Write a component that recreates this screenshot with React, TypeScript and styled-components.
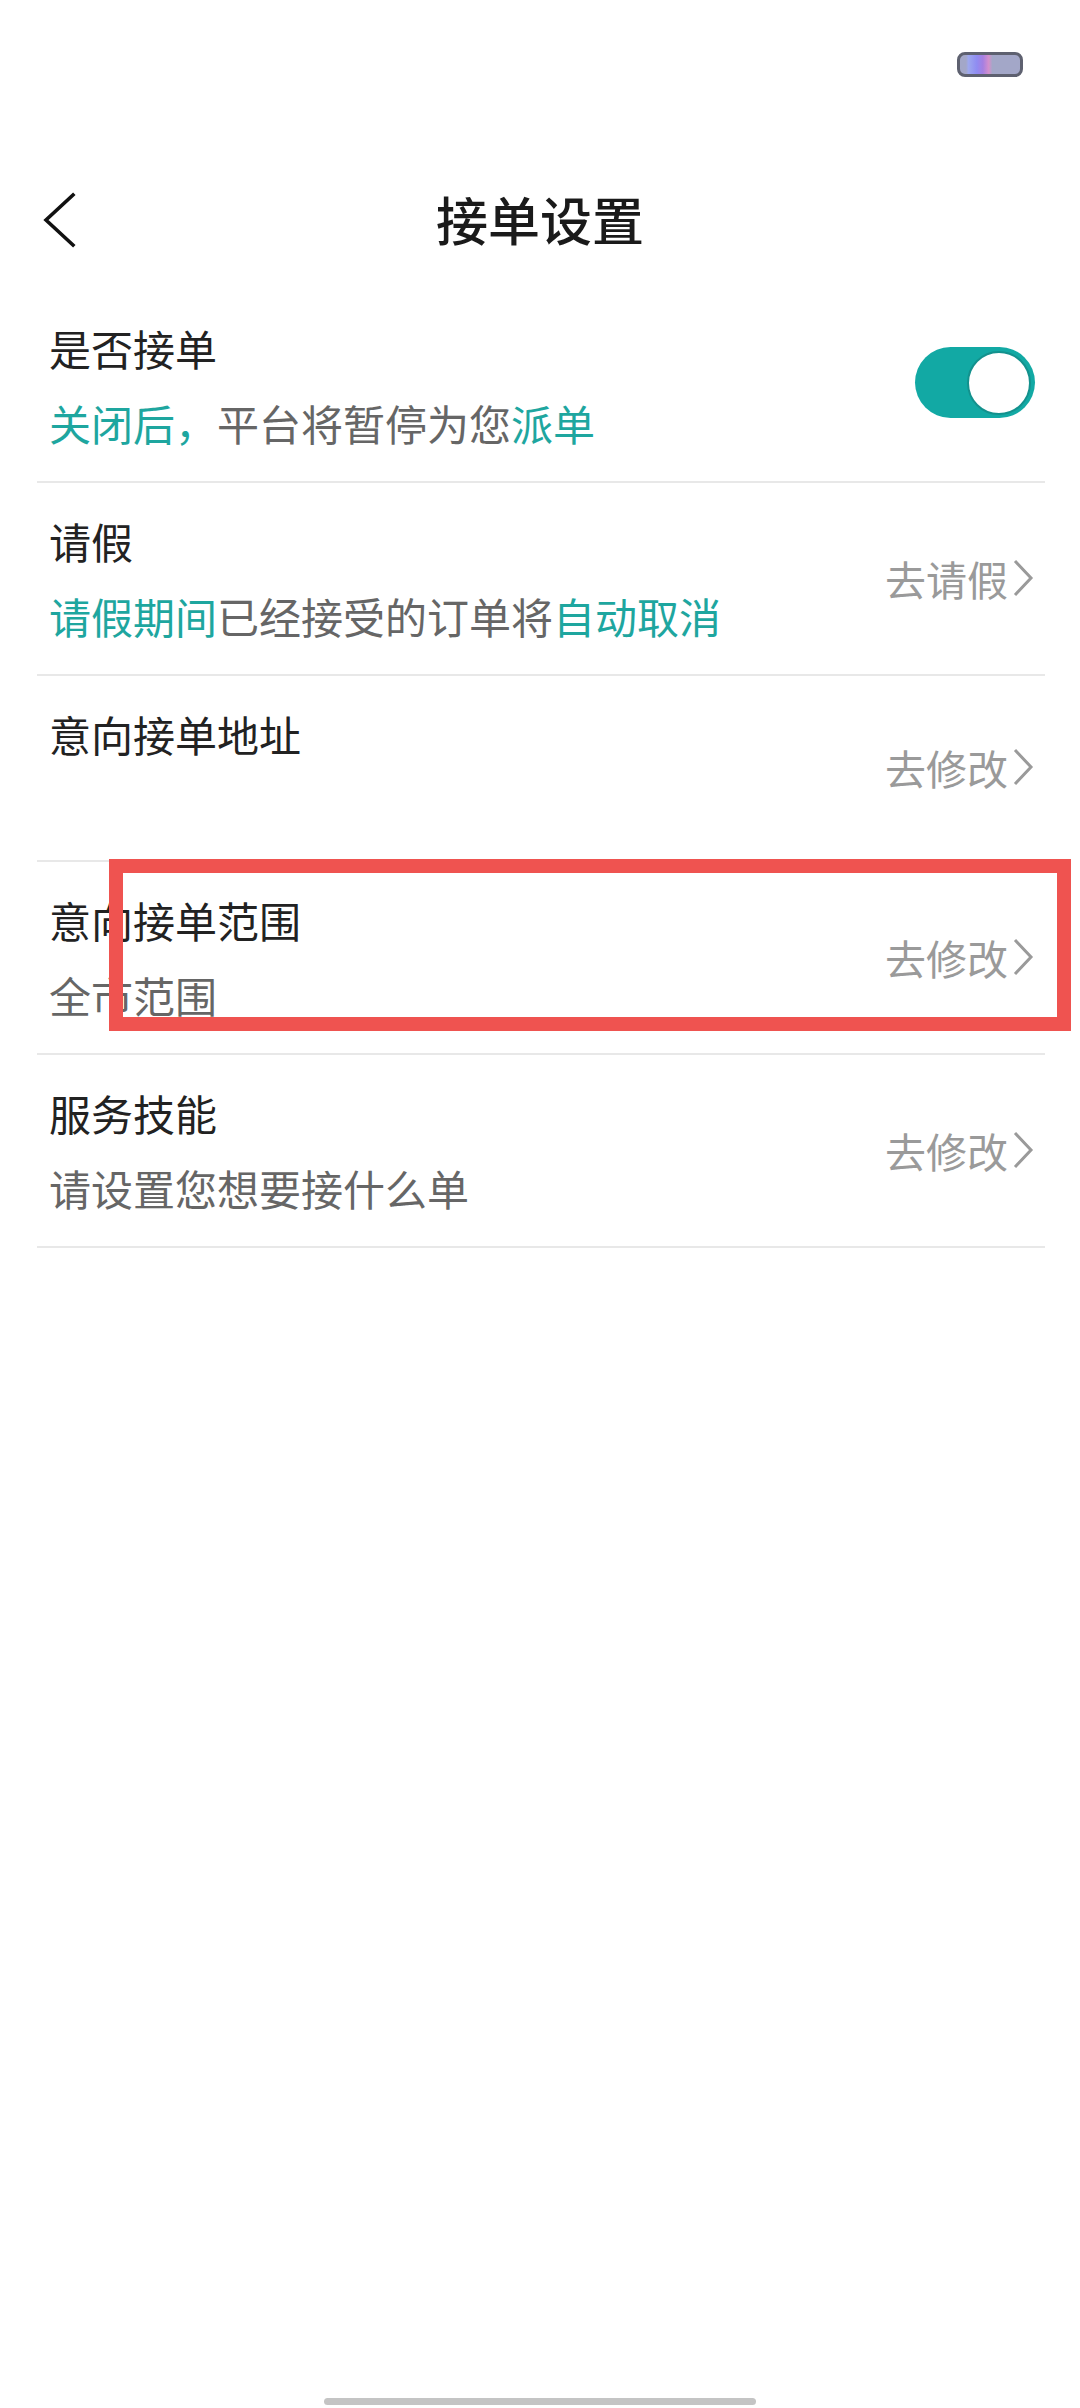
import { FC, ReactNode } from "react";
import styled, { createGlobalStyle } from "styled-components";

const GlobalStyle = createGlobalStyle`
  html, body {
    margin: 0;
    padding: 0;
    background: #ffffff;
  }
  body {
    font-family: "Noto Sans CJK SC", "Noto Sans", sans-serif;
  }
  * {
    box-sizing: border-box;
  }
`;

const Page = styled.div`
  width: 1080px;
  min-height: 2408px;
  display: flex;
  flex-direction: column;
  background: #ffffff;
`;

const StatusBar = styled.div`
  height: 150px;
  display: flex;
  justify-content: flex-end;
  align-items: flex-start;
  padding: 52px 57px 0 0;
`;

const Battery = styled.div`
  width: 66px;
  height: 25px;
  border: 3px solid #5e6170;
  border-radius: 8px;
  background: linear-gradient(
    90deg,
    #a3a7c8 0%,
    #a3a7c8 10%,
    #9ea8ee 14%,
    #8f8cf2 28%,
    #a57fe2 38%,
    #d490cc 48%,
    #a3a7c8 54%,
    #a3a7c8 100%
  );
`;

const NavBar = styled.div`
  height: 140px;
  display: grid;
  grid-template-columns: 160px 1fr 160px;
  align-items: center;
`;

const BackButton = styled.div`
  display: flex;
  align-items: center;
  padding-left: 42px;
  height: 100%;
  cursor: pointer;
`;

const Title = styled.div`
  text-align: center;
  font-size: 52px;
  font-weight: 500;
  color: #1a1a1a;
  line-height: 60px;
  margin-top: -3px;
`;

const List = styled.div`
  margin: 0 35px 0 37px;
  display: flex;
  flex-direction: column;
`;

const Row = styled.div`
  position: relative;
  display: flex;
  align-items: center;
  padding: 28px 10px 28px 12px;
  border-bottom: 2px solid #e8e8e8;
`;

const RowText = styled.div`
  flex: 1;
  display: flex;
  flex-direction: column;
  gap: 15px;
`;

const RowTitle = styled.div`
  font-size: 42px;
  line-height: 60px;
  color: #222222;
`;

const RowSub = styled.div<{ $empty?: boolean }>`
  font-size: 42px;
  line-height: 60px;
  height: ${(p) => (p.$empty ? "53px" : "60px")};
  color: #666666;
  white-space: nowrap;
`;

const Teal = styled.span`
  color: #1ea69f;
`;

const Action = styled.div`
  display: flex;
  align-items: center;
  gap: 3px;
  font-size: 41px;
  line-height: 50px;
  color: #9a9a9a;
  margin-top: -2px;
`;

const Toggle = styled.div<{ $on: boolean }>`
  width: 120px;
  height: 71px;
  border-radius: 36px;
  background: ${(p) => (p.$on ? "#12a9a4" : "#d8d8d8")};
  display: flex;
  align-items: center;
  justify-content: ${(p) => (p.$on ? "flex-end" : "flex-start")};
  padding: 0 4px;
  margin-top: -6px;
`;

const Knob = styled.div`
  width: 64px;
  height: 64px;
  border-radius: 50%;
  background: #ffffff;
  border: 2px solid #13918d;
`;

const Highlight = styled.div`
  position: absolute;
  left: 72px;
  top: -3px;
  width: 962px;
  height: 172px;
  border: 14px solid #ef5350;
  pointer-events: none;
`;

const HomeBar = styled.div`
  margin: auto auto 3px;
  width: 432px;
  height: 7px;
  border-radius: 4px;
  background: #c4c4c4;
`;

const BackIcon = () => (
  <svg width="34" height="56" viewBox="0 0 34 56" fill="none">
    <polyline
      points="31,3 4,28 31,53"
      stroke="#111"
      strokeWidth="3.6"
      strokeLinecap="square"
      strokeLinejoin="miter"
    />
  </svg>
);

const Arrow = () => (
  <svg width="24" height="40" viewBox="0 0 24 40" fill="none">
    <polyline
      points="4,3 20,20 4,37"
      stroke="#9a9a9a"
      strokeWidth="3"
      strokeLinejoin="miter"
    />
  </svg>
);

interface ItemProps {
  title: string;
  sub?: ReactNode;
  action?: string;
  toggle?: boolean;
  highlight?: boolean;
}

const Item: FC<ItemProps> = ({ title, sub, action, toggle, highlight }) => (
  <Row>
    <RowText>
      <RowTitle>{title}</RowTitle>
      <RowSub $empty={!sub}>{sub}</RowSub>
    </RowText>
    {toggle !== undefined ? (
      <Toggle $on={toggle}>
        <Knob />
      </Toggle>
    ) : (
      <Action>
        {action}
        <Arrow />
      </Action>
    )}
    {highlight && <Highlight />}
  </Row>
);

const App: FC = () => {
  return (
    <Page>
      <GlobalStyle />
      <StatusBar>
        <Battery />
      </StatusBar>
      <NavBar>
        <BackButton>
          <BackIcon />
        </BackButton>
        <Title>接单设置</Title>
        <div />
      </NavBar>
      <List>
        <Item
          title="是否接单"
          toggle={true}
          sub={
            <>
              <Teal>关闭后，</Teal>平台将暂停为您<Teal>派单</Teal>
            </>
          }
        />
        <Item
          title="请假"
          action="去请假"
          sub={
            <>
              <Teal>请假期间</Teal>已经接受的订单将<Teal>自动取消</Teal>
            </>
          }
        />
        <Item title="意向接单地址" action="去修改" />
        <Item title="意向接单范围" action="去修改" sub="全市范围" highlight />
        <Item title="服务技能" action="去修改" sub="请设置您想要接什么单" />
      </List>
      <HomeBar />
    </Page>
  );
};

export default App;
